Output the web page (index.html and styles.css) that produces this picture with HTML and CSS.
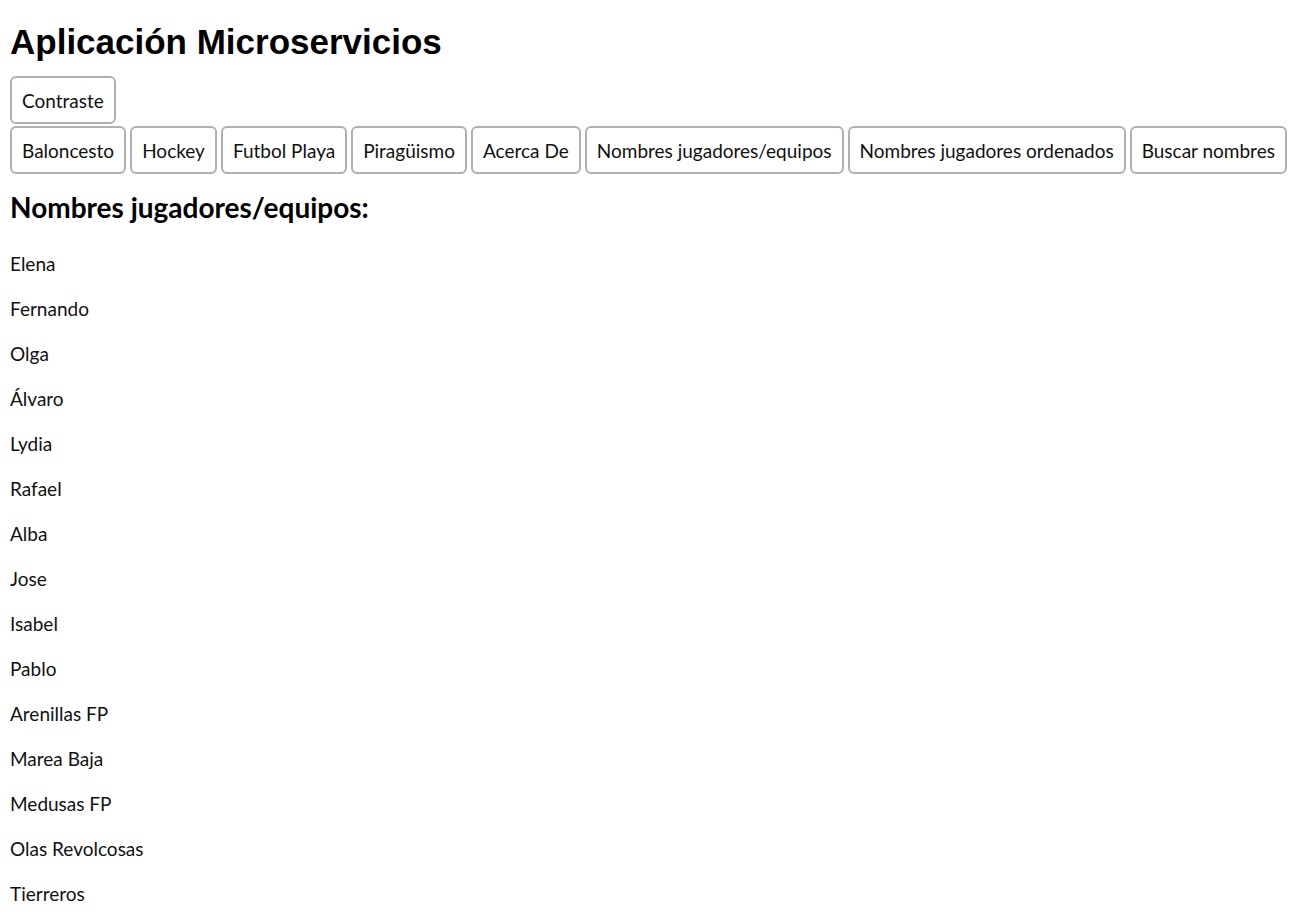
FILE: index.html
```html
<!DOCTYPE html>
<html lang="es">
<head>
<meta charset="utf-8">
<title>Aplicación Microservicios</title>
<link rel="stylesheet" href="styles.css">
</head>
<body>
<h1 class="title">Aplicación Microservicios</h1>
<div class="btn-row">
  <button class="btn">Contraste</button>
</div>
<nav class="btn-row nav">
  <button class="btn">Baloncesto</button>
  <button class="btn">Hockey</button>
  <button class="btn">Futbol Playa</button>
  <button class="btn">Piragüismo</button>
  <button class="btn">Acerca De</button>
  <button class="btn">Nombres jugadores/equipos</button>
  <button class="btn">Nombres jugadores ordenados</button>
  <button class="btn">Buscar nombres</button>
</nav>
<h2 class="section-title">Nombres jugadores/equipos:</h2>
<div class="names">
  <p>Elena</p>
  <p>Fernando</p>
  <p>Olga</p>
  <p>Álvaro</p>
  <p>Lydia</p>
  <p>Rafael</p>
  <p>Alba</p>
  <p>Jose</p>
  <p>Isabel</p>
  <p>Pablo</p>
  <p>Arenillas FP</p>
  <p>Marea Baja</p>
  <p>Medusas FP</p>
  <p>Olas Revolcosas</p>
  <p>Tierreros</p>
</div>
</body>
</html>
```
FILE: styles.css
```css
html, body {
  margin: 0;
  padding: 0;
  background: #fff;
}
body {
  padding: 0 10px;
  font-family: Lato, "Noto Sans", sans-serif;
  color: #111;
  font-size: 19px;
}
.title {
  font-family: "Liberation Sans", Arial, sans-serif;
  font-size: 35px;
  font-weight: bold;
  line-height: 40px;
  margin: 22px 0 0;
  color: #000;
}
.btn-row {
  display: flex;
  flex-wrap: wrap;
  gap: 4px;
  margin-top: 14px;
}
.nav {
  margin-top: 2px;
}
.btn {
  font-family: Lato, "Noto Sans", sans-serif;
  font-size: 19px;
  color: #111;
  background: #fff;
  border: 2px solid #b0b0b0;
  border-radius: 6px;
  height: 48px;
  padding: 1px 10px 0;
  line-height: 43px;
}
.section-title {
  font-size: 28px;
  font-weight: bold;
  line-height: 34px;
  margin: 16px 0 0;
  color: #000;
}
.names {
  margin-top: 26px;
}
.names p {
  margin: 0 0 18px;
  line-height: 27px;
}
```
